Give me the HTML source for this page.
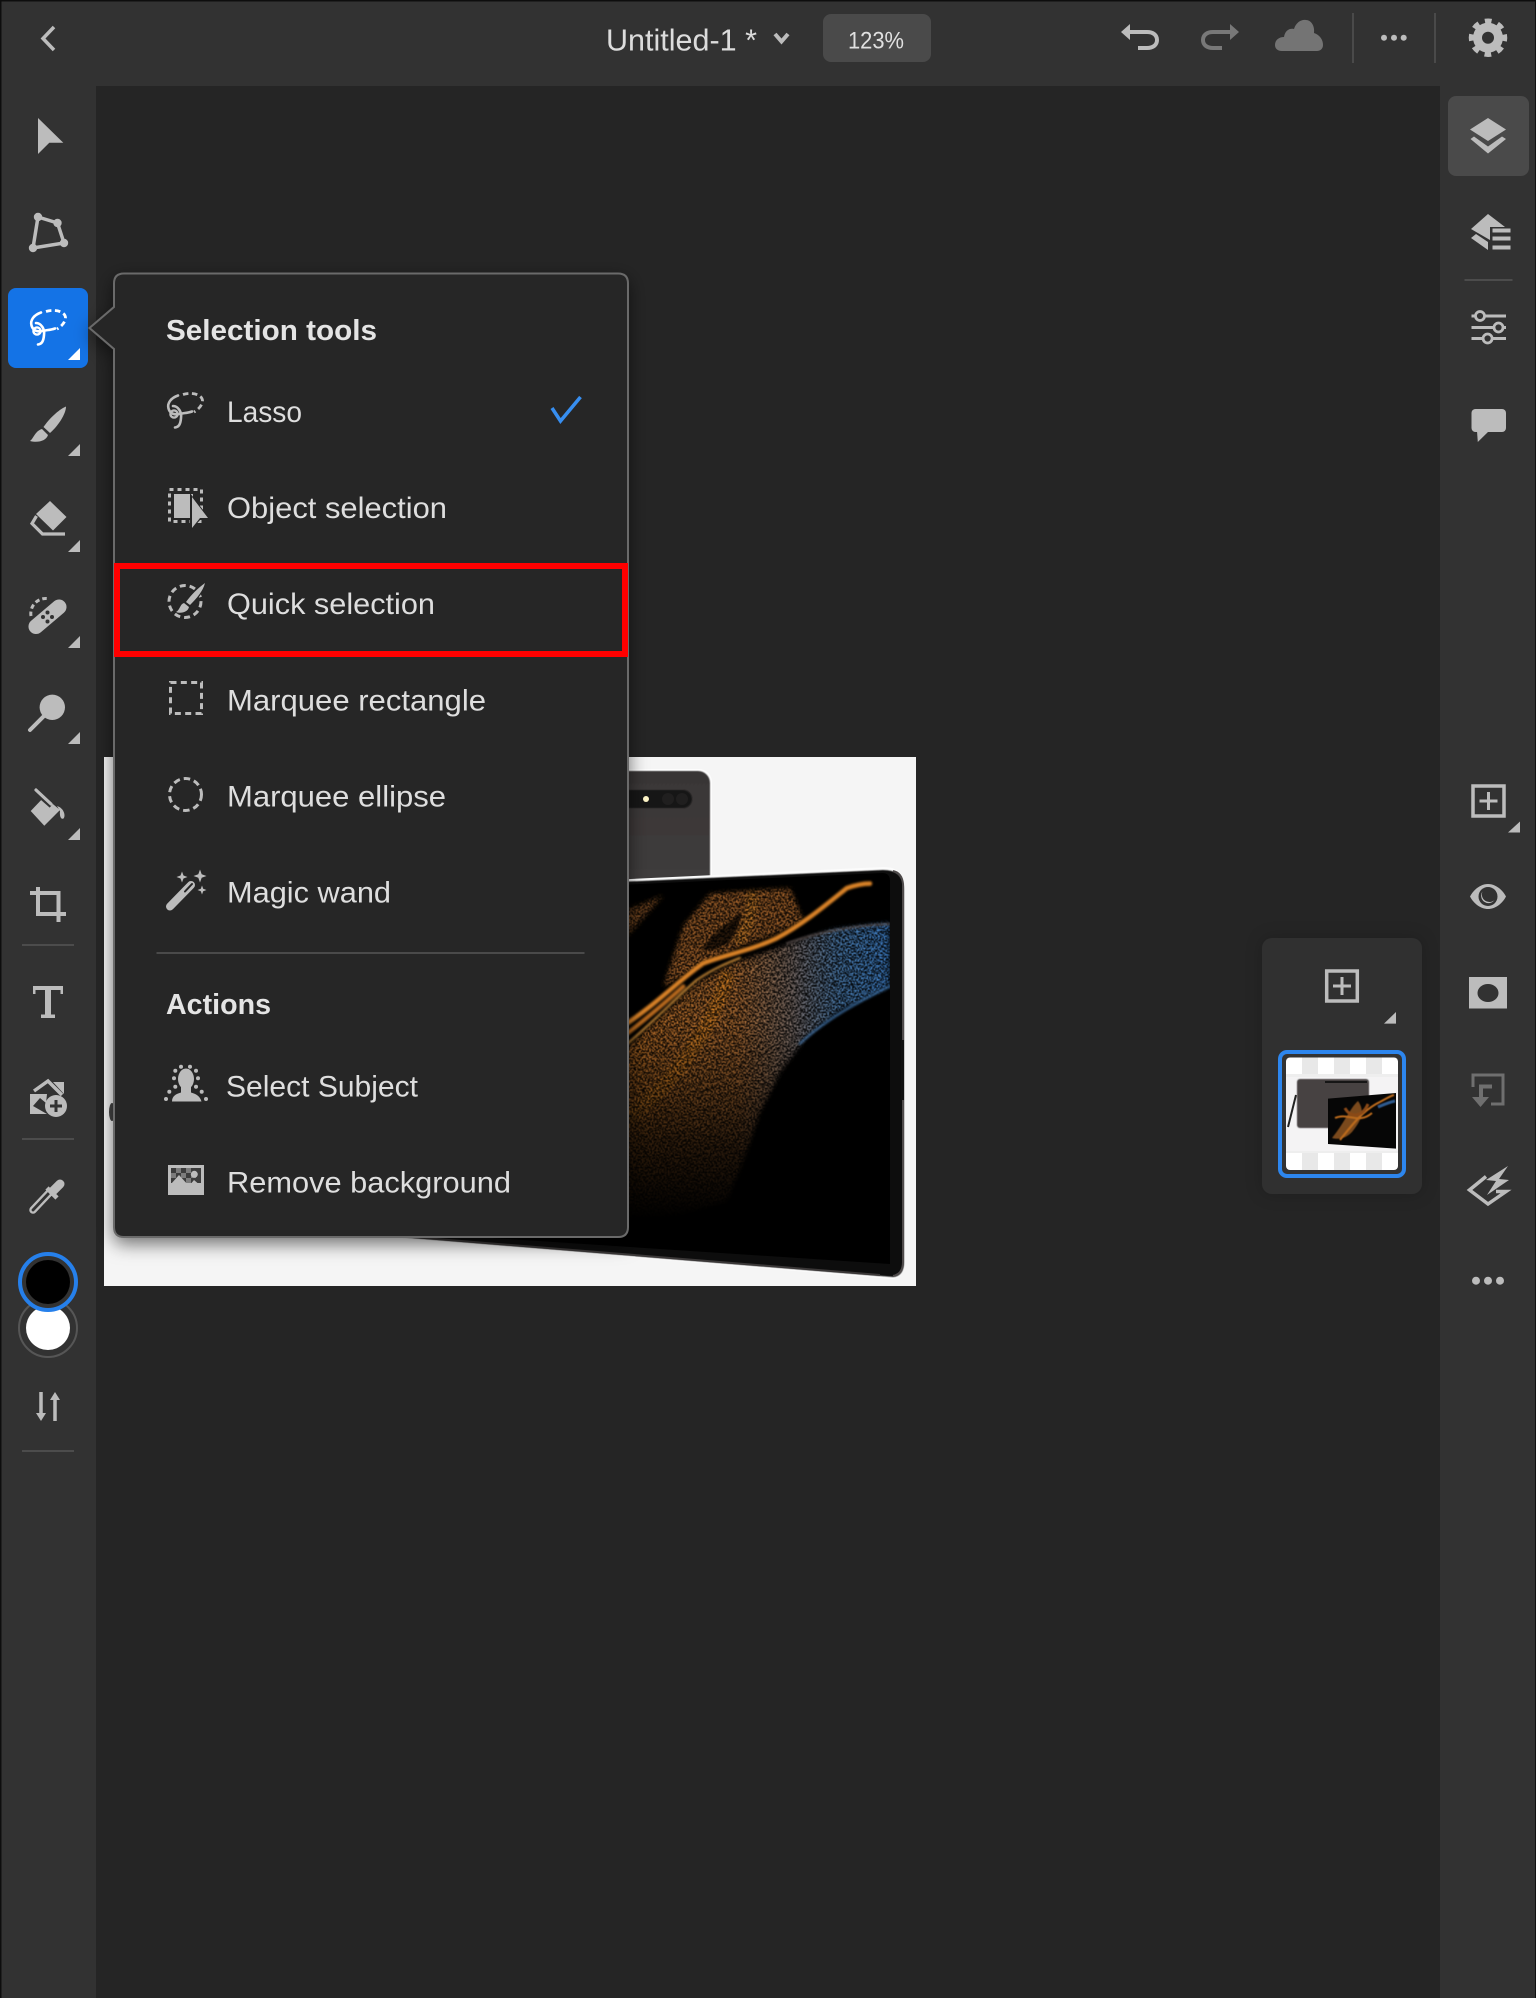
<!DOCTYPE html>
<html lang="en"><head><meta charset="utf-8"><title>Untitled-1</title>
<style>html,body{margin:0;padding:0;background:#252525}svg{display:block}
text{font-family:"Liberation Sans",sans-serif}
.t{font-size:30px;fill:#dedede}
.b{font-size:29px;font-weight:bold;fill:#e4e4e4}
.ic{fill:#bcbcbc}.st{fill:none;stroke:#bcbcbc}
</style></head><body>
<svg xmlns="http://www.w3.org/2000/svg" width="1536" height="1998" viewBox="0 0 1536 1998">
<defs>
<filter id="sp" x="-5%" y="-5%" width="110%" height="110%" filterUnits="objectBoundingBox">
<feGaussianBlur in="SourceGraphic" stdDeviation="6" result="s"/>
<feTurbulence type="fractalNoise" baseFrequency=".23" numOctaves="2" seed="7" result="n"/>
<feColorMatrix in="n" type="matrix" values="0 0 0 0 0 0 0 0 0 0 0 0 0 0 0 6.500 0 0 0 -2.900" result="a"/>
<feComposite in="s" in2="a" operator="in" result="c"/>
<feGaussianBlur in="c" stdDeviation="1.200"/>
</filter>
<filter id="soft" x="-20%" y="-20%" width="140%" height="140%"><feGaussianBlur stdDeviation="3"/></filter>
<filter id="sm" x="-10%" y="-10%" width="120%" height="120%"><feGaussianBlur stdDeviation=".5"/></filter>
<filter id="sh" x="-15%" y="-15%" width="130%" height="130%"><feDropShadow dx="0" dy="6" stdDeviation="9" flood-color="#000" flood-opacity=".55"/></filter>
<linearGradient id="mass" x1="85" x2="870" y1="0" y2="0" gradientUnits="userSpaceOnUse">
<stop offset="0" stop-color="#d07a2a"/><stop offset=".42" stop-color="#c47a3a"/><stop offset=".62" stop-color="#8c7a72"/><stop offset=".8" stop-color="#5286bc"/><stop offset="1" stop-color="#4692e6"/></linearGradient>
<linearGradient id="fade" x1="0" x2="0" y1="800" y2="1340" gradientUnits="userSpaceOnUse">
<stop offset="0" stop-color="#fff" stop-opacity="1"/><stop offset=".3" stop-color="#fff" stop-opacity=".7"/><stop offset=".6" stop-color="#fff" stop-opacity=".32"/><stop offset="1" stop-color="#fff" stop-opacity="0"/></linearGradient>
<linearGradient id="back" x1="0" x2="0" y1="0" y2="1"><stop offset="0" stop-color="#393636"/><stop offset="1" stop-color="#474444"/></linearGradient>
<mask id="mfade" maskUnits="userSpaceOnUse" x="-400" y="300" width="1400" height="1200"><rect x="-400" y="300" width="1400" height="1200" fill="url(#fade)"/></mask>
<clipPath id="imgclip"><rect x="104" y="757" width="812" height="529"/></clipPath>
<clipPath id="screen"><path d="M400 900 L885 872 Q890 874 890 880 L890 1265 L400 1232Z"/></clipPath>
<clipPath id="thumb"><rect x="1286" y="1057.5" width="112" height="112.5" rx="4"/></clipPath>
<g id="lasso">
<path d="M46 311.500C54 309 65 311 65.500 317.500C65.500 322 61.500 326.500 57 329" fill="none" stroke-width="2.800" stroke-dasharray="5.500 3.500"/>
<path d="M41 312.500C34 315 30 320 31.500 325.500C33 331 38 332 42 331C46.500 330 51 330 55 328.500M36 323C41 323 45 329 44 335C43.500 341 42 344 38 344.500" fill="none" stroke-width="2.600" stroke-linecap="round"/>
<circle cx="37" cy="331" r="3.600" fill="none" stroke-width="2.400"/>
</g>
</defs>

<!-- base -->
<rect width="1536" height="1998" fill="#252525"/>
<!-- canvas image -->
<g clip-path="url(#imgclip)">
<rect x="104" y="757" width="812" height="529" fill="#f5f5f5"/>
<ellipse cx="112" cy="1112" rx="3" ry="9" fill="#444"/>
<!-- back tablet -->
<rect x="400" y="769" width="312" height="240" rx="13" fill="#fdfdfd"/>
<rect x="400" y="771" width="310" height="240" rx="12" fill="url(#back)" filter="url(#sm)"/>
<rect x="500" y="790" width="192" height="18" rx="9" fill="#151414" filter="url(#sm)"/>
<circle cx="646" cy="799" r="3" fill="#fff6c8"/>
<circle cx="668" cy="799" r="6" fill="#201f1f"/><circle cx="682" cy="799" r="6" fill="#201f1f"/>
<!-- front tablet -->
<path d="M400 890 L883 867 Q897 867 901 875 Q905 880 905 890 L905 1262 Q905 1277 893 1279 L880 1278 L400 1238Z" fill="#fcfcfc"/>
<path d="M400 892 L883 870 Q897 870 901 878 Q904 882 904 890 L904 1262 Q904 1276 893 1277 L400 1237Z" fill="#0e0d0d" filter="url(#sm)"/>
<path d="M893 871Q902 873 903 884V1262Q903 1274 893 1276" fill="none" stroke="#4e4a4a" stroke-width="2"/>
<path d="M400 1236L880 1275" fill="none" stroke="#3a3737" stroke-width="2"/>
<rect x="901" y="1040" width="3" height="60" fill="#111"/>
<path d="M400 895L882 873Q890 873 890 881V1264L400 1232Z" fill="#000"/>
<g clip-path="url(#screen)">
<g transform="translate(600 740) scale(.33333 .35714)">
<g mask="url(#mfade)">
<g filter="url(#sp)">
<path d="M-200 1080 L85 860 L290 680 L400 625 L560 575 L700 530 L868 512 L868 690 L720 755 L620 830 L540 930 L480 1040 L440 1150 L380 1290 L200 1340 L-200 1400Z" fill="url(#mass)"/>
<path d="M70 1060C150 1020 240 930 320 800C350 745 370 700 385 650" fill="none" stroke="#f0902a" stroke-width="42"/>
</g>
</g>
<g filter="url(#sp)">
<path d="M190 690 L250 520 L330 430 L470 420 L570 415 L610 505 L520 545 L430 575 L330 615 L270 650Z" fill="#b46c2e"/>
<path d="M70 480 L190 435 L110 520 L70 560Z" fill="#8c5428"/>
<path d="M455 425C465 480 435 530 415 570" fill="none" stroke="#e08a2e" stroke-width="32"/>
</g>
<path d="M305 590C340 535 395 505 425 480C415 545 385 590 305 590Z" fill="#000" opacity=".7" filter="url(#soft)"/>
<g fill="none" stroke-linecap="round" filter="url(#soft)">
<path d="M70 800C170 740 240 670 310 625C380 600 450 590 530 555C610 515 680 460 740 415C770 405 790 402 810 402" stroke="#d98226" stroke-width="13"/>
<path d="M70 860C160 790 230 720 290 672C340 640 380 625 420 610" stroke="#e09a3c" stroke-width="5"/>
<path d="M70 830C140 780 190 740 250 690" stroke="#b8691f" stroke-width="12"/>
<path d="M560 570C660 535 760 520 868 515" stroke="#8e7d78" stroke-width="5" opacity=".6"/>
<path d="M868 690C780 730 680 780 600 850" stroke="#4f93d8" stroke-width="7" opacity=".6"/>
</g>
</g>
</g>
</g>

<!-- header & rails -->
<rect x="0" y="0" width="1536" height="86" fill="#323232"/>
<rect x="0" y="0" width="96" height="1998" fill="#323232"/>
<rect x="1440" y="0" width="96" height="1998" fill="#323232"/>
<rect x="0" y="0" width="1536" height="1.500" fill="#0d0d0d"/>
<rect x="0" y="0" width="1.500" height="1998" fill="#0d0d0d"/>
<rect x="1535" y="0" width="1" height="1998" fill="#111"/>

<!-- header content -->
<path d="M54 27L43 38.500L54 50" class="st" stroke-width="3.500"/>
<text x="606" y="50.500" font-size="31" textLength="151" lengthAdjust="spacingAndGlyphs" fill="#dcdcdc">Untitled-1 *</text>
<path d="M775 34L781.500 41.500L788 34" class="st" stroke-width="4"/>
<rect x="823" y="14" width="108" height="48" rx="8" fill="#4a4a4a"/>
<text x="848" y="48.500" font-size="24" textLength="56" lengthAdjust="spacingAndGlyphs" fill="#e0e0e0">123%</text>
<path d="M1128 32H1147C1153 32 1157 35 1157 40C1157 45 1153 48 1147 48H1138" class="st" stroke-width="4"/><path d="M1121 32L1130 24V40Z" class="ic"/>
<path d="M1232 32H1213C1207 32 1203 35 1203 40C1203 45 1207 48 1213 48H1222" fill="none" stroke="#787878" stroke-width="4"/><path d="M1239 32L1230 24V40Z" fill="#787878"/>
<path d="M1282 51C1277 51 1275 48 1275 45C1275 40 1279 37 1284 37C1285 31 1289 28 1294 29C1296 22 1302 19 1306 20C1311 20 1315 26 1314 33C1320 35 1323 40 1323 45C1323 49 1320 51 1317 51Z" fill="#747474"/>
<rect x="1352" y="13" width="2" height="50" fill="#4a4a4a"/><rect x="1434" y="13" width="2" height="50" fill="#4a4a4a"/>
<circle cx="1384" cy="37.700" r="3" class="ic"/><circle cx="1394" cy="37.700" r="3" class="ic"/><circle cx="1403.700" cy="37.700" r="3" class="ic"/>
<circle cx="1488" cy="37.700" r="15" class="ic"/>
<circle cx="1488" cy="37.700" r="16.500" fill="none" stroke="#bcbcbc" stroke-width="5.500" stroke-dasharray="6.500 6.460" transform="rotate(-11 1488 37.700)"/>
<circle cx="1488" cy="37.700" r="6" fill="#323232"/>

<!-- left rail -->
<path d="M38 118L63.300 142.700H49.300L38 154Z" class="ic"/>
<path d="M38 217L57.500 223L64 243L33 248Z" class="st" stroke-width="3.500"/>
<circle cx="38" cy="217" r="4.200" class="ic"/><circle cx="57.500" cy="223" r="4.200" class="ic"/><circle cx="64" cy="243" r="4.200" class="ic"/><circle cx="33" cy="248" r="4.200" class="ic"/>
<rect x="8" y="288" width="80" height="80" rx="8" fill="#1473e6"/>
<use href="#lasso" stroke="#fff"/>
<path d="M80 348L68 360H80Z" fill="#fff"/>
<!-- brush -->
<path d="M66 406.500C66 414 58 426 50 433L43.500 427C49 419 58 410 66 406.500Z" class="ic"/>
<path d="M42 429L48 435C46 441 38 443 30 441C34 438 35 431 42 429Z" class="ic"/>
<path d="M80 444L68 456H80Z" class="ic"/>
<!-- eraser -->
<path d="M50 501L66.500 517L53 530.500L36 514Z" class="ic"/>
<path d="M36.500 516L32 523.500L42.500 534H65" class="st" stroke-width="3.200"/>
<path d="M80 540L68 552H80Z" class="ic"/>
<!-- heal -->
<path d="M31 616A15 15 0 0 1 47 598.500" class="st" stroke-width="3" stroke-dasharray="4.500 3"/>
<path d="M59 607L36 626.500" class="st" stroke-width="15" stroke-linecap="round"/>
<g fill="#323232"><circle cx="47.500" cy="612.500" r="2"/><circle cx="43" cy="617" r="2"/><circle cx="52" cy="617" r="2"/><circle cx="47.500" cy="621.500" r="2"/></g>
<path d="M80 636L68 648H80Z" class="ic"/>
<!-- spot -->
<circle cx="52.300" cy="707.300" r="12.700" class="ic"/>
<path d="M43.300 716.700L30 730" class="st" stroke-width="4" stroke-linecap="round"/>
<path d="M80 732L68 744H80Z" class="ic"/>
<!-- fill -->
<path d="M30.700 811L44.300 796.700L60 810L44.300 825.700Z" class="ic"/>
<path d="M35 790L52 805" stroke="#323232" stroke-width="7"/>
<path d="M36 790L51 804" class="st" stroke-width="3.200" stroke-linecap="round"/>
<path d="M57 806C64 808 66 816 63.500 818.500C60.500 820 59.500 815 60 811Z" class="ic"/>
<path d="M80 828L68 840H80Z" class="ic"/>
<!-- crop -->
<path d="M38 887V914H66M30 893H58.500V922" class="st" stroke-width="4"/>
<rect x="22" y="944" width="52" height="2" fill="#4c4c4c"/>
<!-- T -->
<path d="M33 986H63V994H60.500V990H51V1014.500H55V1018H41V1014.500H45V990H35.500V994H33Z" class="ic"/>
<!-- add image -->
<path d="M34 1091L48 1081L62 1095" class="st" stroke-width="3.500"/>
<path d="M53 1082H64V1094Z" class="ic"/>
<path d="M30 1094H47L46 1103L40 1098L33 1106L47 1114H30Z" class="ic"/>
<circle cx="56" cy="1106" r="11" class="ic"/>
<path d="M56 1100V1112M50 1106H62" stroke="#323232" stroke-width="3"/>
<rect x="22" y="1138" width="52" height="2" fill="#4c4c4c"/>
<!-- dropper -->
<path d="M33 1210L49 1193" class="st" stroke-width="7.500" stroke-linecap="round"/>
<path d="M33 1210L49 1193" fill="none" stroke="#323232" stroke-width="2.800" stroke-linecap="round"/>
<path d="M53 1191L60 1184" class="st" stroke-width="9" stroke-linecap="round"/>
<path d="M47 1188L57 1198" class="st" stroke-width="4.500"/>
<!-- colors -->
<circle cx="48" cy="1328" r="29" fill="#323232" stroke="#565656" stroke-width="2"/>
<circle cx="48" cy="1328" r="22" fill="#fff"/>
<circle cx="48" cy="1282" r="28" fill="#323232" stroke="#2680eb" stroke-width="4"/>
<circle cx="48" cy="1282" r="22" fill="#000"/>
<!-- swap -->
<path d="M41 1392V1413" class="st" stroke-width="3.500"/><path d="M36 1413H46L41 1421Z" class="ic"/>
<path d="M55 1421V1400" class="st" stroke-width="3.500"/><path d="M50 1400H60L55 1392Z" class="ic"/>
<rect x="22" y="1450" width="52" height="2" fill="#4c4c4c"/>

<!-- right rail -->
<rect x="1448" y="96" width="81" height="80" rx="8" fill="#4a4a4a"/>
<path d="M1488 118L1506 129.500L1488 141L1470 129.500Z" class="ic"/>
<path d="M1470.500 139L1474 136.500L1488 146.500L1502 136.500L1506 139L1488 153.500Z" class="ic"/>
<path d="M1488 214L1505 227H1490V240L1471 229Z" class="ic"/>
<path d="M1476 234L1488 242V250L1471 238Z" class="ic"/>
<rect x="1492.500" y="228.500" width="18" height="4" class="ic"/><rect x="1492.500" y="236.500" width="18" height="4" class="ic"/><rect x="1492.500" y="245.500" width="18" height="4" class="ic"/>
<rect x="1464.500" y="279" width="48" height="2" fill="#4c4c4c"/>
<path d="M1471.500 316H1506M1471.500 327.500H1506M1471.500 338.500H1506" class="st" stroke-width="3"/>
<circle cx="1480" cy="316" r="4.500" fill="#323232" stroke="#bcbcbc" stroke-width="2.800"/>
<circle cx="1498.500" cy="327.500" r="4.500" fill="#323232" stroke="#bcbcbc" stroke-width="2.800"/>
<circle cx="1487.600" cy="338.500" r="4.500" fill="#323232" stroke="#bcbcbc" stroke-width="2.800"/>
<rect x="1471.500" y="409" width="34.500" height="23" rx="4" class="ic"/>
<path d="M1477 431L1477.800 442L1489 431Z" class="ic"/>

<rect x="1473" y="786" width="31" height="30" class="st" stroke-width="3.500"/>
<path d="M1488.500 792V810M1479.500 801H1497.500" class="st" stroke-width="3"/>
<path d="M1520 821.500L1508 832.500H1520Z" class="ic"/>
<path d="M1470 896.500C1474 889 1481 884 1488 884C1495 884 1502 889 1506 896.500C1502 904 1495 909 1488 909C1481 909 1474 904 1470 896.500Z" class="ic"/>
<circle cx="1488" cy="896.500" r="9.500" fill="#323232"/>
<path d="M1482.500 891.500A7 7 0 1 0 1494.500 900A7.500 7.500 0 0 1 1482.500 891.500Z" class="ic"/>
<rect x="1469" y="977" width="38" height="31.500" class="ic"/>
<ellipse cx="1488" cy="993" rx="10.500" ry="9" fill="#323232"/>
<path d="M1473 1087V1075H1503V1104H1491" fill="none" stroke="#6f6f6f" stroke-width="3"/>
<path d="M1481 1099V1086.500H1492" fill="none" stroke="#6f6f6f" stroke-width="4"/>
<path d="M1472 1097H1489L1480.500 1107Z" fill="#6f6f6f"/>
<path d="M1486 1176.500L1469.500 1190L1488 1204L1506 1191.500L1496 1191.500" class="st" stroke-width="3.500"/>
<path d="M1508 1166L1486 1180L1496 1181L1487 1195L1509 1180L1499 1179Z" class="ic"/>
<circle cx="1476" cy="1280.700" r="4" class="ic"/><circle cx="1488" cy="1280.700" r="4" class="ic"/><circle cx="1500" cy="1280.700" r="4" class="ic"/>

<!-- layers panel -->
<rect x="1262" y="938" width="160" height="256" rx="10" fill="#303030" style="filter:drop-shadow(0 0 8px rgba(0,0,0,.18))"/>
<rect x="1326.700" y="971" width="30.600" height="30" class="st" stroke-width="3.500"/>
<path d="M1342 977V995M1333 986H1351" class="st" stroke-width="3"/>
<path d="M1396 1012L1384 1023.600H1396Z" class="ic"/>
<rect x="1280" y="1052" width="124" height="124" rx="7" fill="#333" stroke="#2d86ee" stroke-width="4"/>
<g clip-path="url(#thumb)">
<rect x="1286" y="1057" width="112" height="114" fill="#fff"/>
<g fill="#e8e8e8"><rect x="1302" y="1057" width="16" height="17"/><rect x="1334" y="1057" width="16" height="17"/><rect x="1366" y="1057" width="16" height="17"/>
<rect x="1302" y="1153" width="16" height="17"/><rect x="1334" y="1153" width="16" height="17"/><rect x="1366" y="1153" width="16" height="17"/></g>
<rect x="1286" y="1074" width="112" height="3" fill="#eee"/>
<rect x="1286" y="1077" width="112" height="74" fill="#f4f3f4"/>
<rect x="1286" y="1151" width="112" height="2" fill="#eee"/>
<rect x="1297" y="1079" width="72" height="49" rx="3" fill="#464343" filter="url(#sm)"/>
<rect x="1325" y="1081" width="42" height="2" fill="#161616"/>
<path d="M1296 1095L1288 1127" stroke="#222" stroke-width="2"/>
<path d="M1328 1098.600L1396 1093V1148.600L1328 1144Z" fill="#060606"/>
<g filter="url(#sm)">
<path d="M1332 1138C1345 1122 1350 1108 1358 1101C1366 1112 1360 1122 1352 1132C1346 1138 1340 1140 1332 1138Z" fill="#7a4a1c"/>
<path d="M1340 1140C1352 1125 1362 1112 1376 1104C1384 1100 1390 1096 1394 1095M1335 1118C1348 1112 1358 1125 1372 1113" fill="none" stroke="#bb6b1f" stroke-width="2"/>
<path d="M1345 1108C1350 1118 1362 1118 1368 1104" fill="none" stroke="#8a4a18" stroke-width="3"/>
<path d="M1378 1107C1385 1104 1390 1102 1395 1101" fill="none" stroke="#2e5a8e" stroke-width="3"/>
</g>
</g>

<!-- menu -->
<g filter="url(#sh)">
<path d="M124 273.500H618Q628 273.500 628 283.500V1227Q628 1237 618 1237H124Q114 1237 114 1227V349L89.500 328L114 307V283.500Q114 273.500 124 273.500Z" fill="#252525" stroke="#6a6a6a" stroke-width="2"/>
</g>
<text class="b" x="166" y="340" textLength="211" lengthAdjust="spacingAndGlyphs">Selection tools</text>
<text class="t" x="227" y="422" textLength="75" lengthAdjust="spacingAndGlyphs">Lasso</text>
<text class="t" x="227" y="518" textLength="220" lengthAdjust="spacingAndGlyphs">Object selection</text>
<text class="t" x="227" y="614" textLength="208" lengthAdjust="spacingAndGlyphs">Quick selection</text>
<text class="t" x="227" y="710.700" textLength="259" lengthAdjust="spacingAndGlyphs">Marquee rectangle</text>
<text class="t" x="227" y="806.700" textLength="219" lengthAdjust="spacingAndGlyphs">Marquee ellipse</text>
<text class="t" x="227" y="902.700" textLength="164" lengthAdjust="spacingAndGlyphs">Magic wand</text>
<text class="b" x="166" y="1014" textLength="105" lengthAdjust="spacingAndGlyphs">Actions</text>
<text class="t" x="226" y="1096.700" textLength="192" lengthAdjust="spacingAndGlyphs">Select Subject</text>
<text class="t" x="227" y="1192.700" textLength="284" lengthAdjust="spacingAndGlyphs">Remove background</text>
<rect x="156.500" y="952" width="428" height="2" fill="#4a4a4a"/>
<path d="M552 408L560.500 421L580.500 397" fill="none" stroke="#378ef0" stroke-width="3.500"/>

<!-- menu icons -->
<use href="#lasso" stroke="#bcbcbc" transform="translate(137 83)"/>
<!-- object selection -->
<rect x="169.500" y="489.500" width="32" height="32" fill="none" stroke="#bcbcbc" stroke-width="3" stroke-dasharray="4 4"/>
<rect x="174" y="494" width="19" height="24" class="ic"/>
<path d="M190 493L210 519H201L190 531Z" fill="#252525"/>
<path d="M192 497L208 518H200L192 528Z" class="ic"/>
<!-- quick selection -->
<circle cx="185" cy="601.500" r="16" fill="none" stroke="#bcbcbc" stroke-width="3" stroke-dasharray="6 4"/>
<path d="M205 583C203 591 197 598 190 605L186 602C191 595 198 588 205 583Z" class="ic" stroke="#252525" stroke-width="2.500" paint-order="stroke"/>
<path d="M184 603L189 607C188 612 181 614 176 612C180 610 180 604 184 603Z" class="ic" stroke="#252525" stroke-width="2" paint-order="stroke"/>
<!-- marquee -->
<rect x="170.500" y="682.500" width="31" height="31" fill="none" stroke="#bcbcbc" stroke-width="3" stroke-dasharray="6 4.330"/>
<circle cx="185.500" cy="794.500" r="16" fill="none" stroke="#bcbcbc" stroke-width="3" stroke-dasharray="6.500 4"/>
<!-- wand -->
<path d="M170 906.500L191 885" class="st" stroke-width="8" stroke-linecap="round"/>
<path d="M185 891.500L192 884" stroke="#252525" stroke-width="2" stroke-linecap="round"/>
<path d="M182 871.500L183.500 875.500L187.500 877L183.500 878.500L182 882.500L180.500 878.500L176.500 877L180.500 875.500Z" class="ic"/>
<path d="M200 869.500L201.700 874.300L206.500 876L201.700 877.700L200 882.500L198.300 877.700L193.500 876L198.300 874.300Z" class="ic"/>
<path d="M202 885.500L203.200 888.800L206.500 890L203.200 891.200L202 894.500L200.800 891.200L197.500 890L200.800 888.800Z" class="ic"/>
<!-- select subject -->
<ellipse cx="186" cy="1079" rx="8" ry="10.500" class="ic"/>
<path d="M172 1101.500C172 1096 176 1094 181 1092.500V1086H191V1092.500C196 1094 200 1096 201.500 1101.500Z" class="ic"/>
<g class="ic"><circle cx="166" cy="1099" r="2"/><circle cx="169.300" cy="1091.700" r="2"/><circle cx="175.300" cy="1086.700" r="2"/><circle cx="174" cy="1078.300" r="2"/><circle cx="175.300" cy="1070.700" r="2"/><circle cx="181" cy="1066.700" r="2"/><circle cx="190" cy="1066.700" r="2"/><circle cx="196" cy="1070.700" r="2"/><circle cx="198" cy="1078.300" r="2"/><circle cx="196" cy="1086.700" r="2"/><circle cx="201.700" cy="1091.700" r="2"/><circle cx="206" cy="1099" r="2"/></g>
<!-- remove bg -->
<rect x="168" y="1165" width="36" height="30" class="ic"/>
<rect x="171" y="1168" width="30" height="15" fill="#3c3c3c"/>
<g fill="#7c7c7c"><rect x="176" y="1168" width="5" height="5"/><rect x="186" y="1168" width="5" height="5"/><rect x="171" y="1173" width="5" height="5"/><rect x="181" y="1173" width="5" height="5"/><rect x="191" y="1173" width="5" height="5"/><rect x="186" y="1178" width="5" height="5"/></g>
<circle cx="194.300" cy="1174.300" r="3.500" class="ic"/>
<path d="M171 1184L179 1175L189 1186L194 1180L201 1186V1192H171Z" class="ic"/>

<!-- red highlight -->
<rect x="117" y="566" width="508" height="88" fill="none" stroke="#f00" stroke-width="6"/>
</svg>
</body></html>
